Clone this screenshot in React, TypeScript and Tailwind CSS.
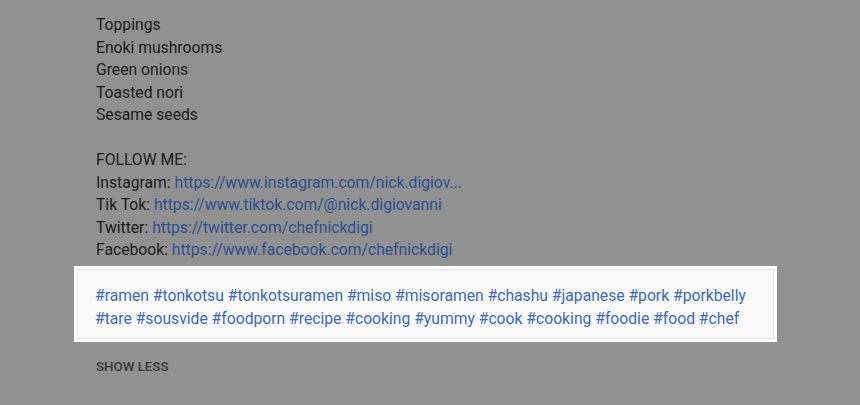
import React from 'react'

const toppings = ['Toppings', 'Enoki mushrooms', 'Green onions', 'Toasted nori', 'Sesame seeds']

const socials = [
    { label: 'Instagram', url: 'https://www.instagram.com/nick.digiov...' },
    { label: 'Tik Tok', url: 'https://www.tiktok.com/@nick.digiovanni' },
    { label: 'Twitter', url: 'https://twitter.com/chefnickdigi' },
    { label: 'Facebook', url: 'https://www.facebook.com/chefnickdigi' },
]

const tagLines = [
    ['ramen', 'tonkotsu', 'tonkotsuramen', 'miso', 'misoramen', 'chashu', 'japanese', 'pork', 'porkbelly'],
    ['tare', 'sousvide', 'foodporn', 'recipe', 'cooking', 'yummy', 'cook', 'cooking', 'foodie', 'food', 'chef'],
]

export default function App() {
    return (
        <main
            className="min-h-screen w-full bg-[#919191] pl-[96px] pt-[14px] text-[15.7px] leading-[22.5px] text-[#1b1b1b]"
            style={{ fontFamily: 'Roboto, "Liberation Sans", sans-serif' }}
        >
            <div>
                {toppings.map(item => (
                    <div key={item}>{item}</div>
                ))}
                <div className="h-[22.5px]" />
                <div>FOLLOW ME:</div>
                {socials.map(s => (
                    <div key={s.label}>
                        {s.label}: <a className="text-[#2c4f91]">{s.url}</a>
                    </div>
                ))}
            </div>

            <div className="-ml-[22px] mt-[4.5px] w-[703px] bg-white p-[3px]">
                <div className="border border-[#e2e2e2] bg-[#f9f9f9] pl-[17px] pt-[15px] pb-[8px]">
                    {tagLines.map((line, i) => (
                        <div key={i} className="text-[#3d69bd]">
                            {line.map(t => `#${t}`).join(' ')}
                        </div>
                    ))}
                </div>
            </div>

            <button className="mt-[17px] text-[13.3px] font-medium leading-[15px] text-[#373737]">
                SHOW LESS
            </button>
        </main>
    )
}
